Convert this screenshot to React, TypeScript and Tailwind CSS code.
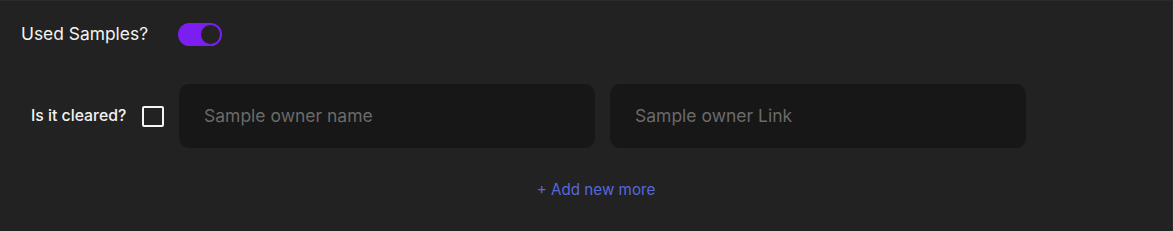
import { useState } from 'react'

export default function App() {
  const [used, setUsed] = useState(true)
  const [cleared, setCleared] = useState(false)

  return (
    <div
      className="h-[231px] w-full border-t border-r border-[#2a2a2a] bg-[#222222] text-white"
      style={{ fontFamily: 'Inter, "Noto Sans", sans-serif' }}
    >
      {/* Used samples toggle */}
      <div className="flex items-center pt-[21px] pl-[21px]">
        <span className="text-[17.4px] leading-[24px] text-[#f2f2f2]">Used Samples?</span>
        <button
          onClick={() => setUsed(!used)}
          className={`ml-[30px] flex h-[23px] w-[44px] items-center rounded-full px-[2px] ${
            used ? 'justify-end bg-[#7b1ff0]' : 'justify-start bg-[#444]'
          }`}
        >
          <span className="h-[19px] w-[19px] rounded-full bg-[#232323]" />
        </button>
      </div>

      {/* Cleared row */}
      <div className="mt-[38px] flex items-center">
        <span className="ml-[31px] w-[96px] whitespace-nowrap pb-[1px] text-[15.8px] font-medium text-[#f2f2f2]">
          Is it cleared?
        </span>
        <button
          onClick={() => setCleared(!cleared)}
          className="ml-[15px] h-[21px] w-[22px] rounded-[2px] border-2 border-[#f5f5f5]"
        />
        <input
          placeholder="Sample owner name"
          className="ml-[15px] h-[64px] w-[416px] rounded-[10px] bg-[#171717] px-[25px] pb-[2px] text-[17.5px] text-white outline-none placeholder:text-[#6a6a6a]"
        />
        <input
          placeholder="Sample owner Link"
          className="ml-[15px] h-[64px] w-[416px] rounded-[10px] bg-[#171717] px-[25px] pb-[2px] text-[17.5px] text-white outline-none placeholder:text-[#6a6a6a]"
        />
      </div>

      {/* Add new more */}
      <div className="mt-[31px] flex justify-center pl-[20px]">
        <button className="text-[15.2px] text-[#5668da]">+ Add new more</button>
      </div>
    </div>
  )
}
